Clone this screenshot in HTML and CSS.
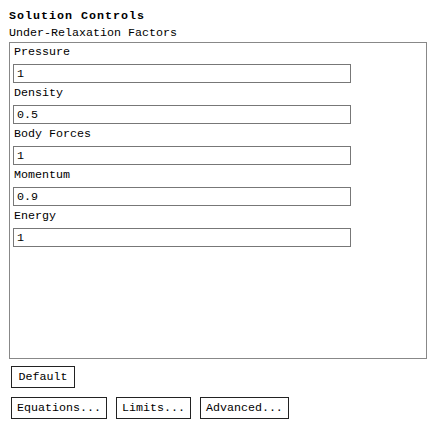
FILE: index.html
```html
<!DOCTYPE html>
<html>
<head>
<meta charset="utf-8">
<link rel="stylesheet" href="styles.css">
</head>
<body>
<div class="panel">
  <div class="title">Solution Controls</div>
  <div class="caption">Under-Relaxation Factors</div>
  <div class="box">
    <div class="field">
      <div class="label">Pressure</div>
      <input class="input" type="text" value="1">
    </div>
    <div class="field">
      <div class="label">Density</div>
      <input class="input" type="text" value="0.5">
    </div>
    <div class="field">
      <div class="label">Body Forces</div>
      <input class="input" type="text" value="1">
    </div>
    <div class="field">
      <div class="label">Momentum</div>
      <input class="input" type="text" value="0.9">
    </div>
    <div class="field">
      <div class="label">Energy</div>
      <input class="input" type="text" value="1">
    </div>
  </div>
  <div class="row row-first">
    <button class="btn btn-default">Default</button>
  </div>
  <div class="row">
    <button class="btn">Equations...</button>
    <button class="btn">Limits...</button>
    <button class="btn">Advanced...</button>
  </div>
</div>
</body>
</html>
```
FILE: styles.css
```css
html, body {
  margin: 0;
  padding: 0;
  background: #ffffff;
}
body {
  font-family: "Liberation Mono", "DejaVu Sans Mono", monospace;
  font-size: 11.67px;
  color: #000000;
}
.panel {
  padding: 8px 0 0 9px;
  width: 418px;
  display: flex;
  flex-direction: column;
}
.title {
  font-weight: bold;
  letter-spacing: 1px;
  line-height: 16px;
  height: 16px;
}
.caption {
  line-height: 16px;
  height: 17px;
  padding-top: 1px;
}
.box {
  border: 1px solid #888888;
  height: 313px;
  padding: 2px 0 0 3px;
  display: flex;
  flex-direction: column;
  gap: 3px;
}
.field {
  display: flex;
  flex-direction: column;
}
.label {
  height: 17px;
  line-height: 15px;
  margin-bottom: 2px;
  padding-left: 1px;
}
.input {
  box-sizing: border-box;
  width: 338px;
  height: 19px;
  margin: 0;
  border: 1px solid #777777;
  padding: 0 3px;
  font-family: inherit;
  font-size: inherit;
  color: #000000;
  background: #ffffff;
  outline: none;
}
.row {
  display: flex;
  gap: 9px;
  margin-top: 9px;
  padding-left: 2px;
}
.row-first {
  margin-top: 7px;
}
.btn {
  box-sizing: border-box;
  height: 22px;
  margin: 0;
  padding: 0 5px;
  border: 1px solid #222222;
  border-radius: 0;
  background: #ffffff;
  font-family: inherit;
  font-size: inherit;
  color: #000000;
  line-height: 18px;
}
.btn-default {
  width: 64px;
}
```
